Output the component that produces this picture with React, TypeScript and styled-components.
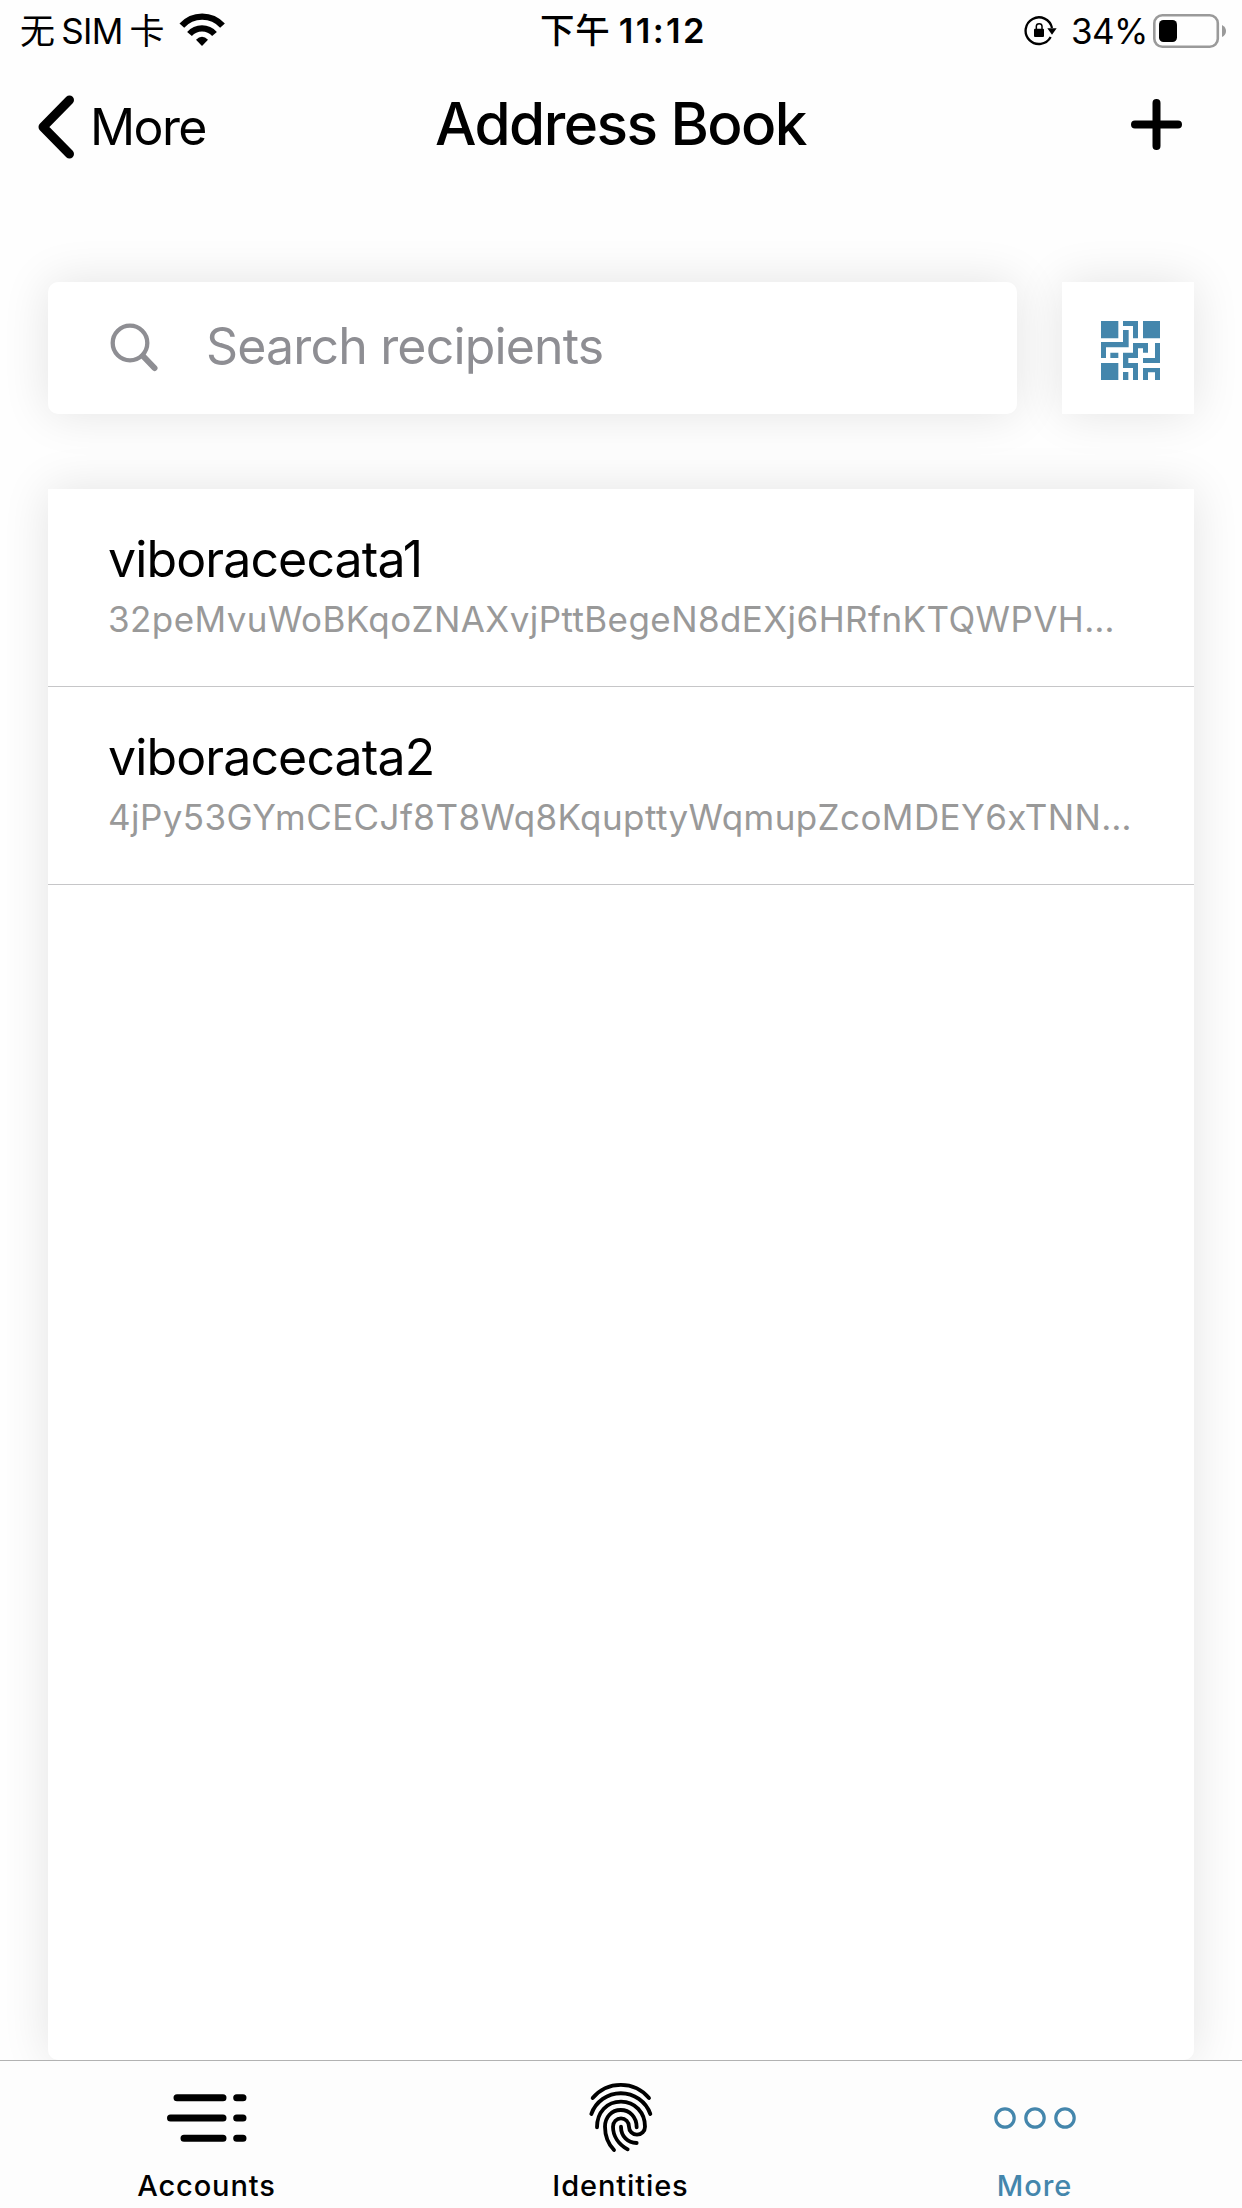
import React from 'react';
import styled, { createGlobalStyle } from 'styled-components';

const accent = '#4486ac';

const GlobalStyle = createGlobalStyle`
  * { box-sizing: border-box; }
  body {
    margin: 0;
    background: #fefefe;
    color: #000;
    font-family: Inter, "Noto Sans CJK SC", sans-serif;
  }
  svg { display: block; flex: none; }
  button { border: 0; background: none; padding: 0; font: inherit; color: inherit; }
`;

const Screen = styled.div`
  width: 1242px;
  height: 2208px;
  display: flex;
  flex-direction: column;
  overflow: hidden;
`;

const StatusBar = styled.header`
  flex: none;
  height: 62px;
  display: grid;
  grid-template-columns: 1fr auto 1fr;
  align-items: center;
  padding: 0 16px 0 20px;
  font-size: 35px;
  line-height: 62px;
  white-space: nowrap;
`;

const Carrier = styled.div`
  display: flex;
  align-items: center;
  gap: 15px;

  svg { margin-bottom: 3px; }
`;

const CarrierName = styled.span`
  word-spacing: -2.5px;
  letter-spacing: -0.6px;
`;

const Clock = styled.div`
  font-weight: 600;
  font-size: 34.5px;
  letter-spacing: 2.4px;
  margin-right: -1px;
`;

const ClockPrefix = styled.span`
  font-weight: 500;
  letter-spacing: 0.8px;
  margin-right: -3px;
`;

const DeviceState = styled.div`
  display: flex;
  align-items: center;
  justify-content: flex-end;
`;

const BatteryLevel = styled.span`
  margin: 0 5px 0 13px;
  letter-spacing: -0.5px;
`;

const NavBar = styled.nav`
  flex: none;
  height: 126px;
  display: grid;
  grid-template-columns: 1fr auto 1fr;
  align-items: center;
  padding: 0 39px 0 38px;
`;

const BackButton = styled.button`
  display: flex;
  align-items: center;
  gap: 16px;
  padding-top: 3px;
  font-size: 50px;
  line-height: 60px;
  letter-spacing: -1.6px;
`;

const Title = styled.h1`
  margin: 0 0 3px;
  font-size: 58.5px;
  line-height: 70px;
  font-weight: 500;
  letter-spacing: -1.55px;
`;

const AddButton = styled.button`
  justify-self: end;
  margin: 0 21px 1px 0;
`;

const SearchRow = styled.div`
  flex: none;
  display: flex;
  gap: 45px;
  margin: 94px 48px 0;
`;

const SearchField = styled.label`
  position: relative;
  z-index: 1;
  flex: 1;
  height: 132px;
  display: flex;
  align-items: center;
  gap: 47px;
  padding: 0 62px;
  border-radius: 10px;
  background: #fff;
  box-shadow: 0 0 48px rgba(0, 0, 0, 0.11);
`;

const Placeholder = styled.span`
  color: #8e8e93;
  font-size: 50px;
  line-height: 60px;
  letter-spacing: -0.83px;
  margin-bottom: 4px;
`;

const ScanButton = styled.button`
  width: 132px;
  height: 132px;
  padding: 39px;
  background: #fff;
  box-shadow: 0 0 48px rgba(0, 0, 0, 0.11);
`;

const RecipientList = styled.ul`
  flex: 1;
  list-style: none;
  margin: 75px 48px 0;
  padding: 0;
  background: #fff;
  border-radius: 0 0 10px 10px;
  box-shadow: 0 0 48px rgba(0, 0, 0, 0.11);
`;

const Recipient = styled.li`
  height: 198px;
  padding: 40px 60px 0;
  border-bottom: 1px solid #c6c6c8;
  white-space: nowrap;
`;

const RecipientName = styled.div`
  font-size: 50px;
  line-height: 60px;
  letter-spacing: -0.88px;
`;

const RecipientAddress = styled.div`
  margin-top: 8px;
  color: #999;
  font-size: 35px;
  line-height: 44px;
  letter-spacing: 0.42px;
`;

const TabBar = styled.nav`
  position: relative;
  flex: none;
  height: 148px;
  display: grid;
  grid-template-columns: repeat(3, 1fr);
  border-top: 1px solid #b2b2b2;
  background: #fdfdfd;
`;

const Tab = styled.button<{ $active?: boolean }>`
  display: flex;
  flex-direction: column;
  align-items: center;
  color: ${(p) => (p.$active ? accent : '#000')};
`;

const TabIcon = styled.span`
  height: 107px;
  padding: 6px 1px 0 0;
  display: flex;
  align-items: center;
`;

const TabLabel = styled.span`
  margin-right: 1px;
  font-size: 29px;
  line-height: 36px;
  font-weight: 500;
  letter-spacing: 0.9px;
`;

const WifiIcon = () => (
  <svg width="46" height="34" viewBox="537 38 138 102" fill="none" stroke="#000" strokeWidth="19">
    <path d="M545.500 76A82 82 0 0 1 667.500 76" />
    <path d="M568.500 101A50 50 0 0 1 643.500 101" />
    <path d="M588 118Q606 100 624 118L606 137Z" fill="#000" stroke="none" />
  </svg>
);

const RotationLockIcon = () => (
  <svg width="34" height="32" viewBox="190 48 102 96">
    <path d="M270 114A40 40 0 1 1 274 87" fill="none" stroke="#000" strokeWidth="7" />
    <path d="M260 88H288L274 107Z" />
    <rect x="220" y="89" width="30" height="25" rx="3" />
    <path d="M227 91V82Q227 74 235.500 74T244 82V91" fill="none" stroke="#000" strokeWidth="4.500" />
  </svg>
);

const BatteryIcon = () => (
  <svg width="73" height="34" viewBox="0 0 73 34">
    <rect x="1.300" y="1.300" width="63.500" height="31.400" rx="8" fill="none" stroke="#9a9a9a" strokeWidth="2.600" />
    <rect x="6" y="6" width="18" height="22" rx="4.500" />
    <path d="M69 11Q73 13 73 17T69 23Z" fill="#9a9a9a" />
  </svg>
);

const BackIcon = () => (
  <svg width="36" height="64" viewBox="0 0 36 64" fill="none" stroke="#000" strokeWidth="9" strokeLinecap="round" strokeLinejoin="round">
    <path d="M31.500 5L5 32L31.500 59" />
  </svg>
);

const PlusIcon = () => (
  <svg width="51" height="51" viewBox="0 0 51 51" stroke="#000" strokeWidth="8" strokeLinecap="round">
    <path d="M25.500 4V47M4 25.500H47" />
  </svg>
);

const SearchIcon = () => (
  <svg width="49" height="50" viewBox="0 0 49 50" fill="none" stroke="#8e8e93" strokeLinecap="round">
    <circle cx="20" cy="20" r="17.300" strokeWidth="4.300" />
    <path d="M33 33L44.500 45" strokeWidth="6" />
  </svg>
);

const ScanIcon = () => (
  <svg width="59.330" height="59.330" viewBox="243 213 178 178" fill={accent}>
    <path d="M243 213H295V265H243ZM369 213H421V265H369ZM243 339H295V391H243Z" />
    <path d="M309 213H354V265H339V228H309Z" />
    <path d="M309 240H326V292H258V324H243V276H309Z" />
    <path d="M271 308H295V324H271ZM309 366H325V391H309Z" />
    <path d="M339 279H384V308H369V295H354V324H325V339H354V391H339V354H309V308H339Z" />
    <path d="M405 279H421V339H369V324H405Z" />
    <path d="M369 354H421V391H405V367H384V391H369Z" />
  </svg>
);

const AccountsIcon = () => (
  <svg width="80" height="48" viewBox="0 0 80 48" stroke="currentColor" strokeWidth="7" strokeLinecap="round">
    <path d="M10 3.700H56M3.500 24H56M17 44.300H56M69.700 3.700H76M69.700 24H76M69.700 44.300H76" />
  </svg>
);

const FingerprintIcon = () => (
  <svg width="68" height="73.330" viewBox="170 92 204 220" fill="none" stroke="currentColor" strokeWidth="11.500" strokeLinecap="round">
    <path d="M187 143A110 110 0 0 1 356 143" />
    <path d="M183 191A94 94 0 0 1 360 191" />
    <path d="M200 231C200 185 230 154 272 154C314 154 344 187 344 229A24 24 0 0 1 296 229A24 25 0 0 0 248 229C248 257 265 282 292 297" />
    <path d="M319 231C319 200 298 179 271 179C244 179 224 200 224 229C224 256 233 280 251 299" />
    <path d="M272 229C272 258 292 277 319 278" />
  </svg>
);

const MoreIcon = () => (
  <svg width="82" height="22" viewBox="0 0 82 22" fill="none" stroke="currentColor" strokeWidth="3.200">
    <circle cx="11" cy="11" r="9.200" />
    <circle cx="41" cy="11" r="9.200" />
    <circle cx="71" cy="11" r="9.200" />
  </svg>
);

const recipients = [
  { name: 'viboracecata1', address: '32peMvuWoBKqoZNAXvjPttBegeN8dEXj6HRfnKTQWPVH…' },
  { name: 'viboracecata2', address: '4jPy53GYmCECJf8T8Wq8KqupttyWqmupZcoMDEY6xTNN…' },
];

const tabs = [
  { label: 'Accounts', icon: <AccountsIcon /> },
  { label: 'Identities', icon: <FingerprintIcon /> },
  { label: 'More', icon: <MoreIcon />, active: true },
];

export default function App() {
  return (
    <>
      <GlobalStyle />
      <Screen>
        <StatusBar>
          <Carrier>
            <CarrierName>无 SIM 卡</CarrierName>
            <WifiIcon />
          </Carrier>
          <Clock><ClockPrefix>下午</ClockPrefix> 11:12</Clock>
          <DeviceState>
            <RotationLockIcon />
            <BatteryLevel>34%</BatteryLevel>
            <BatteryIcon />
          </DeviceState>
        </StatusBar>
        <NavBar>
          <BackButton>
            <BackIcon />
            More
          </BackButton>
          <Title>Address Book</Title>
          <AddButton aria-label="Add recipient"><PlusIcon /></AddButton>
        </NavBar>
        <SearchRow>
          <SearchField>
            <SearchIcon />
            <Placeholder>Search recipients</Placeholder>
          </SearchField>
          <ScanButton aria-label="Scan code"><ScanIcon /></ScanButton>
        </SearchRow>
        <RecipientList>
          {recipients.map((r) => (
            <Recipient key={r.name}>
              <RecipientName>{r.name}</RecipientName>
              <RecipientAddress>{r.address}</RecipientAddress>
            </Recipient>
          ))}
        </RecipientList>
        <TabBar>
          {tabs.map((t) => (
            <Tab key={t.label} $active={t.active}>
              <TabIcon>{t.icon}</TabIcon>
              <TabLabel>{t.label}</TabLabel>
            </Tab>
          ))}
        </TabBar>
      </Screen>
    </>
  );
}
